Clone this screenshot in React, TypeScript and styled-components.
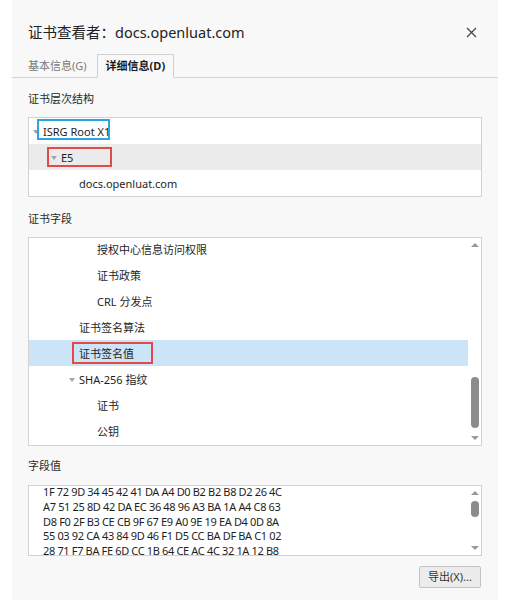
import React from "react";
import styled, { createGlobalStyle } from "styled-components";

const Global = createGlobalStyle`
  html, body { margin: 0; padding: 0; background: #ffffff; }
  body { font-family: "Noto Sans", "Noto Sans CJK SC", sans-serif; color: #1e1e1e; }
  * { box-sizing: border-box; }
`;

const Panel = styled.div`
  margin-left: 12px;
  width: 486px;
  height: 600px;
  background: #f8f8f8;
  display: flex;
  flex-direction: column;
`;

const Header = styled.div`
  height: 54px;
  padding: 22px 0 0 16px;
  display: flex;
  align-items: flex-start;
  justify-content: space-between;
`;

const Title = styled.div`
  font-size: 14.5px;
  line-height: 20px;
  color: #222;
`;

const CloseBtn = styled.div`
  width: 30px;
  height: 20px;
  margin-right: 12px;
  display: flex;
  align-items: center;
  justify-content: center;
`;

const TabBar = styled.div`
  height: 24px;
  border-bottom: 1px solid #d4d4d4;
  display: flex;
  align-items: flex-end;
  padding-left: 16px;
`;

const Tab = styled.div<{ $active?: boolean }>`
  height: ${(p) => (p.$active ? "24px" : "22px")};
  padding: 0 ${(p) => (p.$active ? "8px" : "0")};
  margin-left: ${(p) => (p.$active ? "10px" : "0")};
  margin-bottom: ${(p) => (p.$active ? "-1px" : "0")};
  font-size: 11px;
  line-height: 22px;
  font-weight: ${(p) => (p.$active ? 700 : 400)};
  color: ${(p) => (p.$active ? "#1a1a1a" : "#7a7a7a")};
  background: ${(p) => (p.$active ? "#f8f8f8" : "transparent")};
  border: ${(p) => (p.$active ? "1px solid #d0d0d0" : "none")};
  border-bottom: ${(p) => (p.$active ? "1px solid #f8f8f8" : "none")};
  white-space: nowrap;
  text-align: center;
`;

const Body = styled.div`
  padding: 0 16px;
  display: flex;
  flex-direction: column;
`;

const SectionLabel = styled.div<{ $top: number; $gap: number }>`
  margin-top: ${(p) => p.$top}px;
  margin-bottom: ${(p) => p.$gap}px;
  font-size: 11px;
  line-height: 16px;
  color: #2a2a2a;
`;

const Box = styled.div<{ $h: number }>`
  height: ${(p) => p.$h}px;
  background: #ffffff;
  border: 1px solid #d2d2d2;
  display: flex;
  overflow: hidden;
`;

const List = styled.div<{ $offset?: number }>`
  flex: 1;
  display: flex;
  flex-direction: column;
  margin-top: ${(p) => -(p.$offset || 0)}px;
`;

const Row = styled.div<{ $level: number; $bg?: string }>`
  position: relative;
  height: 26px;
  flex-shrink: 0;
  display: flex;
  align-items: center;
  padding-left: ${(p) => 4 + p.$level * 18}px;
  background: ${(p) => p.$bg || "transparent"};
  font-size: 11px;
  color: #1e1e1e;
  white-space: nowrap;
`;

const Expander = styled.span<{ $show: boolean }>`
  width: 10px;
  height: 26px;
  display: flex;
  align-items: center;
  &::before {
    content: "";
    display: ${(p) => (p.$show ? "block" : "none")};
    width: 0;
    height: 0;
    border-left: 3.5px solid transparent;
    border-right: 3.5px solid transparent;
    border-top: 4px solid #a3a3a3;
    margin-top: 1px;
  }
`;

const Mark = styled.span<{ $color: string; $l: number; $t: number; $w: number; $h: number }>`
  position: absolute;
  left: ${(p) => p.$l}px;
  top: ${(p) => p.$t}px;
  width: ${(p) => p.$w}px;
  height: ${(p) => p.$h}px;
  border: 2px solid ${(p) => p.$color};
  pointer-events: none;
`;

const Scrollbar = styled.div`
  width: 13px;
  display: flex;
  flex-direction: column;
  align-items: center;
`;

const Arrow = styled.div<{ $down?: boolean }>`
  height: 14px;
  width: 13px;
  flex-shrink: 0;
  display: flex;
  align-items: center;
  justify-content: center;
  &::before {
    content: "";
    width: 0;
    height: 0;
    border-left: 4px solid transparent;
    border-right: 4px solid transparent;
    ${(p) =>
      p.$down ? "border-top: 4px solid #9a9a9a;" : "border-bottom: 4px solid #9a9a9a;"}
  }
`;

const Track = styled.div<{ $top: number }>`
  flex: 1;
  padding-top: ${(p) => p.$top}px;
  display: flex;
  justify-content: center;
`;

const Thumb = styled.div<{ $h: number }>`
  width: 8px;
  height: ${(p) => p.$h}px;
  border-radius: 4px;
  background: #8c8c8c;
`;

const HexText = styled.div`
  flex: 1;
  padding: 0 0 0 14px;
  margin-top: -1px;
  font-size: 11px;
  line-height: 14.8px;
  color: #1e1e1e;
  letter-spacing: -0.35px;
  white-space: pre;
`;

const ButtonRow = styled.div`
  display: flex;
  justify-content: flex-end;
  margin-top: 10px;
  padding-right: 1px;
`;

const Button = styled.div`
  width: 62px;
  height: 22px;
  border: 1px solid #c4c4c4;
  border-radius: 2px;
  background: #ececec;
  font-size: 11px;
  line-height: 20px;
  text-align: center;
  color: #333;
`;

type Field = { text: string; level: number; exp?: boolean; sel?: boolean; mark?: boolean };

const fields: Field[] = [
  { text: "授权中心信息访问权限", level: 3 },
  { text: "证书政策", level: 3 },
  { text: "CRL 分发点", level: 3 },
  { text: "证书签名算法", level: 2 },
  { text: "证书签名值", level: 2, sel: true, mark: true },
  { text: "SHA-256 指纹", level: 2, exp: true },
  { text: "证书", level: 3 },
  { text: "公钥", level: 3 },
];

const hex = [
  "1F 72 9D 34 45 42 41 DA A4 D0 B2 B2 B8 D2 26 4C",
  "A7 51 25 8D 42 DA EC 36 48 96 A3 BA 1A A4 C8 63",
  "D8 F0 2F B3 CE CB 9F 67 E9 A0 9E 19 EA D4 0D 8A",
  "55 03 92 CA 43 84 9D 46 F1 D5 CC BA DF BA C1 02",
  "28 71 F7 BA FE 6D CC 1B 64 CE AC 4C 32 1A 12 B8",
];

export default function App() {
  return (
    <>
      <Global />
      <Panel>
        <Header>
          <Title>证书查看者：docs.openluat.com</Title>
          <CloseBtn>
            <svg width="11" height="11" viewBox="0 0 11 11">
              <path d="M1 1 L10 10 M10 1 L1 10" stroke="#444" strokeWidth="1.2" />
            </svg>
          </CloseBtn>
        </Header>
        <TabBar>
          <Tab>基本信息(G)</Tab>
          <Tab $active>详细信息(D)</Tab>
        </TabBar>
        <Body>
          <SectionLabel $top={13} $gap={10}>证书层次结构</SectionLabel>
          <Box $h={80}>
            <List>
              <Row $level={0}>
                <Expander $show />
                ISRG Root X1
                <Mark $color="#2aa6e6" $l={8} $t={1} $w={73} $h={21} />
              </Row>
              <Row $level={1} $bg="#ebebeb">
                <Expander $show />
                E5
                <Mark $color="#e24a4a" $l={18} $t={3} $w={65} $h={20} />
              </Row>
              <Row $level={2}>
                <Expander $show={false} />
                docs.openluat.com
              </Row>
            </List>
          </Box>

          <SectionLabel $top={14} $gap={10}>证书字段</SectionLabel>
          <Box $h={209}>
            <List $offset={2}>
              {fields.map((f) => (
                <Row key={f.text} $level={f.level} $bg={f.sel ? "#cce4f7" : undefined}>
                  <Expander $show={!!f.exp} />
                  {f.text}
                  {f.mark && <Mark $color="#e24a4a" $l={43} $t={2} $w={81} $h={22} />}
                </Row>
              ))}
            </List>
            <Scrollbar>
              <Arrow />
              <Track $top={125}>
                <Thumb $h={51} />
              </Track>
              <Arrow $down />
            </Scrollbar>
          </Box>

          <SectionLabel $top={12} $gap={11}>字段值</SectionLabel>
          <Box $h={71}>
            <HexText>{hex.join("\n")}</HexText>
            <Scrollbar>
              <Arrow />
              <Track $top={1}>
                <Thumb $h={16} />
              </Track>
              <Arrow $down />
            </Scrollbar>
          </Box>

          <ButtonRow>
            <Button>导出(X)...</Button>
          </ButtonRow>
        </Body>
      </Panel>
    </>
  );
}
